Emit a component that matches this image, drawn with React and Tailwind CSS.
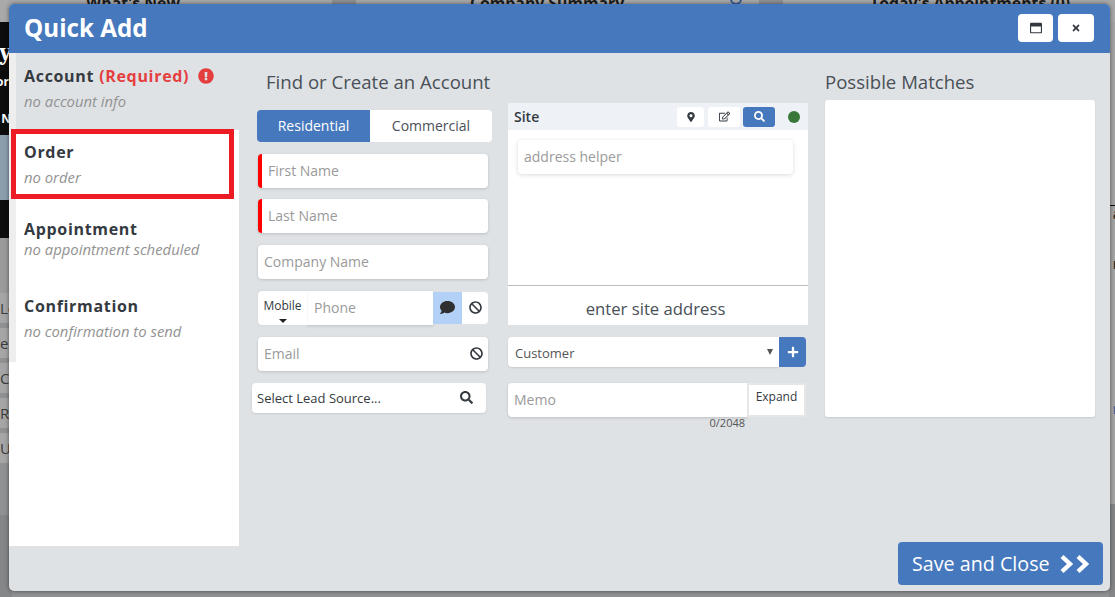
import React from "react";
import { FaExclamationCircle, FaBan, FaSearch, FaMapMarkerAlt, FaRegEdit, FaPlus, FaTimes, FaRegWindowMaximize, FaComment } from "react-icons/fa";

const font = { fontFamily: '"Open Sans", "Noto Sans", sans-serif' };

function SideItem({ title, sub, h, white, titleExtra, top, gap }) {
  return (
    <div className={`border-l-[7px] border-l-[#eeeeee] pl-[8px] ${h} ${white ? "bg-white" : ""} ${top}`}>
      <div className="text-[16px] leading-[24px] font-bold text-[#343a40] tracking-[0.68px] flex items-center">
        {title}{titleExtra}
      </div>
      <div className={`text-[14.85px] leading-[20px] italic text-[#929292] ${gap}`}>{sub}</div>
    </div>
  );
}

function Field({ placeholder, red, right }) {
  return (
    <div className={`h-[34px] w-[230px] ml-[6px] bg-white rounded-[4px] shadow-[0_1px_3px_rgba(0,0,0,0.15)] flex items-center overflow-hidden ${red ? "border-l-[4px] border-l-[#ff0000] pl-[6px]" : "pl-[6px]"}`}>
      <span className="flex-1 text-[14px] text-[#9a9a9a] pb-[1px]">{placeholder}</span>
      {right}
    </div>
  );
}

function Chevrons() {
  return (
    <svg width="32" height="20" viewBox="0 0 32 20" fill="none" stroke="white" strokeWidth="4.4">
      <polyline points="3,2.5 11,10 3,17.5" />
      <polyline points="19,2.5 27,10 19,17.5" />
    </svg>
  );
}

function PageRow({ children }) {
  return <div className="h-[30px] bg-[#a6a6a6] leading-[30px] whitespace-nowrap overflow-hidden">{children}</div>;
}

export default function App() {
  return (
    <div style={font} className="relative w-[1115px] h-[597px] overflow-hidden bg-[#8f9192]">
      {/* dimmed page behind the dialog */}
      <div className="flex flex-col h-full">
        <div className="h-[22px] shrink-0 flex bg-[#8f9192] text-[15.8px] font-bold text-[#1c1c1c] leading-[6px] gap-[24px]">
          <div className="w-[332px] bg-[#a9a9a9] pl-[86px] whitespace-nowrap">What's New</div>
          <div className="w-[403px] bg-[#a9a9a9] pl-[114px] whitespace-nowrap flex">
            <span>Company Summary</span>
            <span className="ml-[106px] w-[12px] h-[12px] mt-[-7px] rounded-full border-[2px] border-[#2f5b94]" />
          </div>
          <div className="flex-1 bg-[#a9a9a9] pl-[87px] whitespace-nowrap">Today's Appointments (0)</div>
        </div>
        <div className="flex-1 flex justify-between min-h-0">
          <div className="w-[12px] flex flex-col">
            <div className="h-[113px] bg-[#0d0d0d] text-white font-bold flex flex-col items-end">
              <div className="text-[24px] leading-[24px] mt-[18px] font-serif">y</div>
              <div className="text-[12px] leading-[14px] mt-[11px] pr-[3px] whitespace-nowrap">or</div>
              <div className="text-[12px] leading-[14px] mt-[23px] pr-[1px] whitespace-nowrap">c N</div>
            </div>
            <div className="h-[65px] bg-[#8aa0ad]" />
            <div className="h-[38px] bg-[#0d0d0d]" />
            <div className="h-[55px] bg-[#9b9b9b]" />
            <div className="flex flex-col gap-[5px] text-[15px] text-[#3c3c3c] pb-[52px]">
              <PageRow>Le</PageRow>
              <PageRow>ee</PageRow>
              <PageRow>Cu</PageRow>
              <PageRow>Re</PageRow>
              <PageRow>Ur</PageRow>
            </div>
            <div className="flex-1 bg-[#858687]" />
          </div>
          <div className="w-[6px] flex flex-col text-[14px] font-bold text-[#333] bg-[#a4a4a4]">
            <div className="h-[183px]" />
            <div className="h-[17px] border-t border-t-[#111] leading-[16px] whitespace-nowrap overflow-hidden">&nbsp;a</div>
            <div className="h-[32px]" />
            <div className="h-[20px] leading-[20px] whitespace-nowrap overflow-hidden">&nbsp;r</div>
            <div className="h-[125px]" />
            <div className="h-[20px] leading-[20px] font-normal text-[#2f5b94] whitespace-nowrap overflow-hidden">&nbsp;n</div>
            <div className="h-[85px]" />
            <div className="flex-1 bg-[#858687]" />
          </div>
        </div>
      </div>

      {/* dialog */}
      <div className="absolute left-[9px] top-[4px] w-[1101px] h-[587px] rounded-[5px] overflow-hidden bg-[#dfe2e5] shadow-[0_0_4px_rgba(0,0,0,0.5)] flex flex-col">
        <div className="h-[49px] shrink-0 bg-[#4678bd] flex items-center justify-between pl-[15px] pr-[16px]">
          <div className="text-[24.2px] font-bold text-white">Quick Add</div>
          <div className="flex gap-[5px] mb-[1px]">
            <button className="w-[35px] h-[28px] bg-white rounded-[4px] flex items-center justify-center text-[#343a40]"><FaRegWindowMaximize size={12} /></button>
            <button className="w-[36px] h-[28px] bg-white rounded-[4px] flex items-center justify-center text-[#343a40]"><FaTimes size={10} /></button>
          </div>
        </div>

        <div className="flex-1 flex min-h-0">
          <div className="w-[230px] shrink-0 flex flex-col h-[493px]">
            <SideItem h="h-[77px]" top="pt-[11px]" gap="mt-[3px]" title="Account" sub="no account info" titleExtra={
              <>
                <span className="text-[#e53e3e] ml-[5px]">(Required)</span>
                <FaExclamationCircle className="text-[#e53e3e] ml-[9px]" size={16} />
              </>
            } />
            <SideItem white h="h-[77px]" top="pt-[10px]" gap="mt-[3px]" title="Order" sub="no order" />
            <SideItem white h="h-[77px]" top="pt-[10px]" gap="mt-[-2px]" title="Appointment" sub="no appointment scheduled" />
            <SideItem white h="h-[78px]" top="pt-[10px]" gap="mt-[3px]" title="Confirmation" sub="no confirmation to send" />
            <div className="flex-1 bg-white" />
          </div>

          <div className="w-[269px] shrink-0 pl-[13px] pt-[16px]">
            <div className="text-[18.6px] leading-[26px] text-[#495057] pl-[14px]">Find or Create an Account</div>
            <div className="mt-[15px] ml-[5px] w-[235px] h-[32px] flex rounded-[4px] overflow-hidden text-[14px]">
              <div className="w-[113px] bg-[#4678bd] text-white flex items-center justify-center pb-[1px]">Residential</div>
              <div className="flex-1 bg-white text-[#495057] flex items-center justify-center pb-[1px]">Commercial</div>
            </div>
            <div className="flex flex-col gap-[11.75px] mt-[11.6px]">
              <Field red placeholder="First Name" />
              <Field red placeholder="Last Name" />
              <Field placeholder="Company Name" />
              <div className="ml-[6px] w-[230px] h-[34px] flex items-stretch">
                <div className="w-[49px] bg-white rounded-l-[4px] flex flex-col items-center justify-center text-[12px] leading-[14px] text-[#343a40] shadow-[0_0_2px_rgba(0,0,0,0.1)] relative">
                  <span className="mt-[-4px]">Mobile</span>
                  <span className="w-0 h-0 border-x-[4px] border-x-transparent border-t-[4px] border-t-[#222] absolute bottom-[2px]" />
                </div>
                <div className="w-[126px] bg-white pl-[7px] pb-[1px] flex items-center text-[14px] text-[#9a9a9a] shadow-[0_1px_3px_rgba(0,0,0,0.15)]">Phone</div>
                <div className="w-[29px] h-[32px] mt-[1px] bg-[#b3d1f7] flex items-center justify-center text-[#2f2f2f]"><FaComment size={15} /></div>
                <div className="flex-1 h-[32px] mt-[1px] bg-white rounded-r-[4px] flex items-center justify-center text-[#343a40] pl-[1px]"><FaBan size={13} /></div>
              </div>
              <Field placeholder="Email" right={<FaBan size={13} className="text-[#343a40] mr-[5px]" />} />
            </div>
            <div className="mt-[12.4px] w-[234px] h-[30px] bg-white rounded-[4px] shadow-[0_1px_2px_rgba(0,0,0,0.1)] flex items-center justify-between pl-[5px] pr-[13px] text-[13px] text-[#343a40]">
              <span className="pt-[1px]">Select Lead Source...</span>
              <FaSearch size={13} />
            </div>
          </div>

          <div className="w-[300px] shrink-0 pt-[50px]">
            <div className="h-[183px] bg-white flex flex-col rounded-t-[3px] overflow-hidden border-b border-b-[#bdbdbd]">
              <div className="h-[27px] bg-[#eef2f7] flex items-center pl-[6px] pr-[8px]">
                <span className="text-[14px] font-semibold text-[#343a40] flex-1">Site</span>
                <div className="flex items-center gap-[4px]">
                  <div className="w-[27px] h-[20px] bg-white rounded-[3px] flex items-center justify-center text-[#343a40]"><FaMapMarkerAlt size={10} /></div>
                  <div className="w-[32px] h-[20px] bg-white rounded-[3px] flex items-center justify-center text-[#343a40]"><FaRegEdit size={11} /></div>
                  <div className="w-[32px] h-[20px] ml-[-1px] bg-[#4678bd] rounded-[3px] flex items-center justify-center text-white"><FaSearch size={11} /></div>
                </div>
                <div className="ml-[13px] w-[12px] h-[12px] rounded-full bg-[#38793a]" />
              </div>
              <div className="pl-[10px] pr-[15px] pt-[10px]">
                <div className="h-[34px] bg-white rounded-[4px] shadow-[0_1px_4px_rgba(0,0,0,0.15)] flex items-center pl-[6px] pb-[1px] text-[14px] text-[#9a9a9a]">address helper</div>
              </div>
            </div>
            <div className="h-[39px] bg-white flex items-center justify-center pr-[5px] pt-[6px] text-[16.7px] text-[#495057]">enter site address</div>
            <div className="mt-[12px] flex h-[30px] w-[298px]">
              <div className="flex-1 bg-white rounded-l-[4px] flex items-center justify-between pl-[7px] pr-[6px] text-[13px] text-[#555] shadow-[0_1px_2px_rgba(0,0,0,0.1)]">
                <span className="pt-[3px]">Customer</span>
                <span className="w-0 h-0 border-x-[3px] border-x-transparent border-t-[6px] border-t-[#555]" />
              </div>
              <div className="w-[27px] bg-[#4678bd] rounded-r-[4px] flex items-center justify-center text-white"><FaPlus size={12} /></div>
            </div>
            <div className="mt-[16px] flex h-[34px] w-[298px]">
              <div className="w-[239px] bg-white rounded-l-[4px] flex items-center pl-[6px] pb-[1px] text-[14px] text-[#9a9a9a] shadow-[0_1px_3px_rgba(0,0,0,0.15)]">Memo</div>
              <div className="flex-1 bg-white border-2 border-[#e6e6e6] text-[12px] text-[#343a40] text-center leading-[24px]">Expand</div>
            </div>
            <div className="w-[237px] text-right text-[11px] leading-[12px] text-[#555]">0/2048</div>
          </div>

          <div className="flex-1 pl-[17px] pt-[16px] pr-[15px] flex flex-col">
            <div className="text-[18.6px] leading-[26px] text-[#495057]">Possible Matches</div>
            <div className="mt-[5px] h-[317px] bg-white rounded-[3px] shadow-[0_1px_2px_rgba(0,0,0,0.1)]" />
          </div>
        </div>

        <div className="absolute right-[7px] bottom-[6px] w-[205px] h-[43px] bg-[#4678bd] rounded-[4px] text-white text-[19.7px] flex items-center pl-[14px] gap-[9px]">
          <span>Save and Close</span>
          <Chevrons />
        </div>
      </div>

      {/* annotation */}
      <div className="absolute left-[11px] top-[129px] w-[223px] h-[70px] border-[5px] border-[#ed1c24]" />
    </div>
  );
}
